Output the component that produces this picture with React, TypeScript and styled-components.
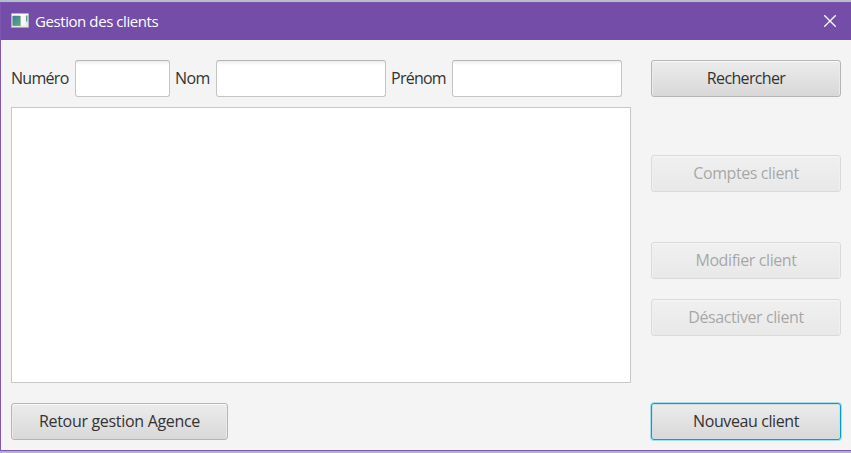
import React from "react";
import styled, { createGlobalStyle, css } from "styled-components";

const GlobalStyle = createGlobalStyle`
  * { box-sizing: border-box; }
  html, body { margin: 0; padding: 0; overflow: hidden; }
  body { font-family: "Open Sans", "Noto Sans", sans-serif; }
`;

const Desktop = styled.div`
  width: 851px;
  height: 453px;
  padding: 2px 0;
  background: linear-gradient(#b4becb 0 2px, #a9afbd 2px 451px, #b3b8c3 453px);
`;

const Window = styled.section`
  display: flex;
  flex-direction: column;
  height: 449px;
  border-left: 1px solid #8158b1;
  border-bottom: 1px solid #8158b1;
  background: #f4f4f4;
`;

const TitleBar = styled.header`
  display: flex;
  align-items: center;
  flex: none;
  height: 38px;
  margin-left: -1px;
  padding: 0 15px 2px 10px;
  border-top: 1px solid #7d55ae;
  border-left: 1px solid #7d55ae;
  background: #744da9;
  color: #fff;
`;

const Title = styled.h1`
  flex: 1;
  margin: 0 0 0 6px;
  font-size: 15px;
  font-weight: 400;
  line-height: 20px;
  letter-spacing: -0.42px;
`;

const CloseButton = styled.button`
  display: flex;
  padding: 0;
  border: 0;
  background: none;
`;

const Content = styled.main`
  display: grid;
  grid-template-columns: 620px 190px;
  column-gap: 20px;
  padding: 20px 10px 0;
`;

const MainColumn = styled.div`
  display: flex;
  flex-direction: column;
  align-items: flex-start;
`;

const SearchRow = styled.form`
  display: flex;
  align-items: center;
  gap: 5px;
`;

const Field = styled.label<{ $width: number }>`
  display: flex;
  align-items: center;
  justify-content: space-between;
  width: ${(p) => p.$width}px;
`;

const Text = styled.span<{ $spacing?: number }>`
  color: #333;
  font-size: 16px;
  line-height: 21px;
  letter-spacing: ${(p) => p.$spacing ?? -0.4}px;
  white-space: nowrap;
`;

const Input = styled.input<{ $width: number }>`
  width: ${(p) => p.$width}px;
  height: 37px;
  padding: 0 9px;
  border: 1px solid #c5c5c5;
  border-top-color: #b6b6b6;
  border-radius: 3px;
  outline: none;
  background: linear-gradient(#ededed, #fff 4px);
  font: inherit;
`;

const ClientList = styled.div`
  width: 620px;
  height: 276px;
  margin: 10px 0 20px;
  border: 1px solid #c8c8c8;
  background: #fff;
`;

const Actions = styled.div`
  display: flex;
  flex-direction: column;
`;

const Button = styled.button<{ $width?: number; $top?: number; $focused?: boolean }>`
  display: flex;
  align-items: center;
  justify-content: center;
  width: ${(p) => p.$width ?? 190}px;
  height: 37px;
  margin: ${(p) => p.$top ?? 0}px 0 0;
  padding: 0;
  border: 1px solid #b5b5b5;
  border-radius: 3px;
  background: linear-gradient(#ececec, #d8d8d8);
  box-shadow: inset 0 1px #fafafa, inset 1px 0 #ebebeb, inset -1px 0 #ebebeb;
  font: inherit;

  &:disabled { opacity: 0.4; }

  ${(p) =>
    p.$focused &&
    css`
      border-color: #039ed3;
      box-shadow: 0 0 0 1px #a8dced, inset 0 0 0 1px #d0dfe4;
    `}
`;

function AppIcon() {
  return (
    <svg width="18" height="15" viewBox="0 0 18 15" aria-hidden="true">
      <defs>
        <linearGradient id="pane" x1="0" y1="0" x2="1" y2="1">
          <stop stopColor="#397eaa" />
          <stop offset="1" stopColor="#62ae70" />
        </linearGradient>
      </defs>
      <path fill="#e9e9e9" stroke="#aaa3a9" strokeWidth=".6" d="M.3.3h17.4v14.2H.3z" />
      <path fill="#fff" d="M1 1h16v2H1z" />
      <path fill="url(#pane)" stroke="#55757c" strokeWidth=".5" d="M1.8 3h7.4v9.5H1.8z" />
      <path fill="#f7f7f7" d="M10 3h4.5v9.5H10z" />
      <path fill="#5ba198" d="M15 2.5h1.4v6H15z" />
    </svg>
  );
}

function CloseIcon() {
  return (
    <svg width="12" height="12" viewBox="0 0 12 12" aria-hidden="true">
      <path d="M.3.3 11.7 11.7M11.7.3.3 11.7" stroke="#fff" strokeWidth="1.3" />
    </svg>
  );
}

export default function App() {
  return (
    <>
      <GlobalStyle />
      <Desktop>
        <Window>
          <TitleBar>
            <AppIcon />
            <Title>Gestion des clients</Title>
            <CloseButton aria-label="Fermer"><CloseIcon /></CloseButton>
          </TitleBar>
          <Content>
            <MainColumn>
              <SearchRow>
                <Field $width={159}><Text $spacing={-0.7}>Numéro</Text><Input $width={95} /></Field>
                <Field $width={211}><Text $spacing={-0.55}>Nom</Text><Input $width={170} /></Field>
                <Field $width={231}><Text $spacing={-0.75}>Prénom</Text><Input $width={170} /></Field>
              </SearchRow>
              <ClientList />
              <Button $width={217}><Text $spacing={-0.31}>Retour gestion Agence</Text></Button>
            </MainColumn>
            <Actions>
              <Button><Text $spacing={-0.66}>Rechercher</Text></Button>
              <Button $top={58} disabled><Text>Comptes client</Text></Button>
              <Button $top={50} disabled><Text>Modifier client</Text></Button>
              <Button $top={20} disabled><Text>Désactiver client</Text></Button>
              <Button $top={67} $focused><Text>Nouveau client</Text></Button>
            </Actions>
          </Content>
        </Window>
      </Desktop>
    </>
  );
}
